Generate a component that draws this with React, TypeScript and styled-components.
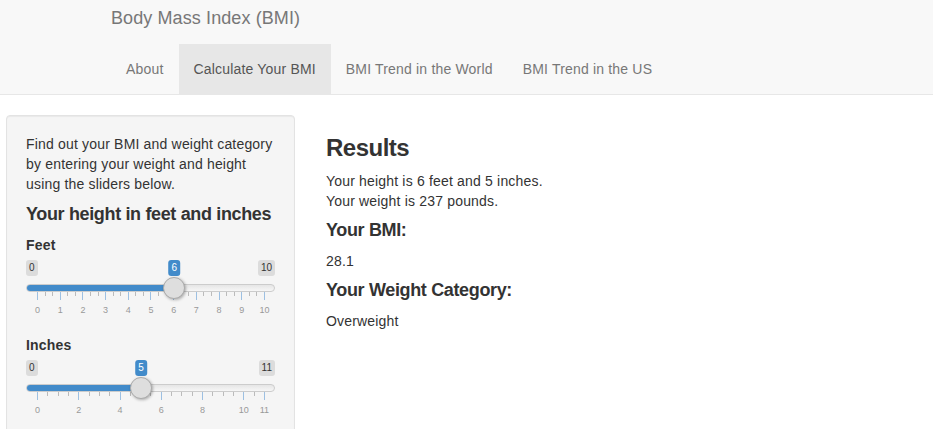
import React from "react";
import styled, { createGlobalStyle } from "styled-components";

const GlobalStyle = createGlobalStyle`
  html, body { margin: 0; padding: 0; background: #fff; }
  body {
    font-family: "Liberation Sans", Arial, sans-serif;
    font-size: 14px;
    line-height: 1.428571;
    letter-spacing: 0.18px;
    color: #333;
  }
  * { box-sizing: border-box; }
`;

const Navbar = styled.nav`
  background: #f8f8f8;
  border-bottom: 1px solid #e7e7e7;
  padding-left: 111px;
  margin-bottom: 20px;
`;

const Brand = styled.div`
  height: 44px;
  padding-top: 8px;
  font-size: 18px;
  line-height: 20px;
  letter-spacing: 0.1px;
  color: #777;
`;

const NavList = styled.ul`
  display: flex;
  list-style: none;
  margin: 0;
  padding: 0;
  height: 50px;
`;

const NavItem = styled.li<{ $active?: boolean }>`
  padding: 15px;
  line-height: 20px;
  color: ${(p) => (p.$active ? "#555" : "#777")};
  background: ${(p) => (p.$active ? "#e7e7e7" : "transparent")};
`;

const Page = styled.div`
  display: flex;
  align-items: flex-start;
  padding-left: 6px;
  gap: 31px;
`;

const Well = styled.div`
  width: 289px;
  min-height: 330px;
  background: #f5f5f5;
  border: 1px solid #e3e3e3;
  border-radius: 4px;
  padding: 19px;
  box-shadow: inset 0 1px 1px rgba(0, 0, 0, 0.05);
`;

const Main = styled.div`
  display: flex;
  flex-direction: column;
`;

const Para = styled.p`
  margin: 0 0 10px;
`;

const H3 = styled.h3`
  font-size: 24px;
  font-weight: 700;
  line-height: 1.1;
  letter-spacing: -0.5px;
  margin: 20px 0 10px;
`;

const H4 = styled.h4`
  font-size: 18px;
  font-weight: 700;
  line-height: 1.1;
  letter-spacing: -0.35px;
  margin: 10px 0;
`;

const Line = styled.div`
  line-height: 20px;
`;

const FormGroup = styled.div`
  margin-bottom: 15px;
`;

const Label = styled.div`
  font-weight: 700;
  line-height: 20px;
  margin-bottom: 5px;
`;

/* ---------- range slider ---------- */

const Slider = styled.div`
  display: flex;
  flex-direction: column;
  height: 60px;
`;

const LabelRow = styled.div`
  position: relative;
  display: flex;
  justify-content: space-between;
  align-items: flex-start;
  height: 24px;
`;

const Chip = styled.span<{ $accent?: boolean }>`
  font-size: 10px;
  line-height: 1.4;
  letter-spacing: 0;
  padding: 1px 3px;
  border-radius: 3px;
  background: ${(p) => (p.$accent ? "#428bca" : "rgba(0, 0, 0, 0.1)")};
  color: ${(p) => (p.$accent ? "#fff" : "#333")};
`;

const ValueChip = styled(Chip)`
  position: absolute;
  top: 0;
  transform: translateX(-50%);
`;

const TrackBox = styled.div`
  position: relative;
  height: 8px;
`;

const Track = styled.div`
  display: flex;
  height: 8px;
  border: 1px solid #ccc;
  border-radius: 8px;
  background: linear-gradient(to bottom, #ddd -50%, #fff 150%);
  overflow: hidden;
`;

const Bar = styled.div`
  margin: -1px 0 -1px -1px;
  height: 8px;
  background: #428bca;
`;

const Handle = styled.div`
  position: absolute;
  top: -7px;
  width: 22px;
  height: 22px;
  margin-left: -11px;
  border-radius: 50%;
  border: 1px solid #ababab;
  background: #dedede;
  box-shadow: 1px 1px 3px rgba(0, 0, 0, 0.3);
`;

const Grid = styled.div`
  display: flex;
  justify-content: space-between;
  align-items: flex-start;
  margin: 0 10px 0 11px;
`;

const TickCol = styled.div`
  display: flex;
  flex-direction: column;
  align-items: center;
  width: 1px;
`;

const TickMark = styled.span<{ $small?: boolean }>`
  width: 1px;
  height: ${(p) => (p.$small ? "4px" : "8px")};
  background: ${(p) => (p.$small ? "#bbb" : "#9dc0e2")};
`;

const TickText = styled.span`
  margin-top: 5px;
  font-size: 9px;
  line-height: 10px;
  letter-spacing: 0;
  white-space: nowrap;
  color: #999;
`;

type Tick = { v: number; major: boolean };

type SliderProps = {
  min: number;
  max: number;
  value: number;
  ticks: Tick[];
};

const GRID_W = 228;

const RangeSlider: React.FC<SliderProps> = ({ min, max, value, ticks }) => {
  const handleX = 11 + ((value - min) / (max - min)) * GRID_W;
  return (
    <Slider>
      <LabelRow>
        <Chip>{min}</Chip>
        <ValueChip $accent style={{ left: handleX + 0.5 }}>
          {value}
        </ValueChip>
        <Chip>{max}</Chip>
      </LabelRow>
      <TrackBox>
        <Track>
          <Bar style={{ width: handleX + 1 }} />
        </Track>
        <Handle style={{ left: handleX }} />
      </TrackBox>
      <Grid>
        {ticks.map((t) => (
          <TickCol key={t.v}>
            <TickMark $small={!t.major} />
            {t.major && <TickText>{t.v}</TickText>}
          </TickCol>
        ))}
      </Grid>
    </Slider>
  );
};

const feetTicks: Tick[] = Array.from({ length: 31 }, (_, i) => ({
  v: i % 3 === 0 ? i / 3 : i / 3 + 100,
  major: i % 3 === 0,
}));
const inchMajors = [0, 2, 4, 6, 8, 10, 11];
const inchTicks: Tick[] = Array.from({ length: 23 }, (_, i) => ({
  v: i / 2,
  major: inchMajors.includes(i / 2),
}));

export default function App() {
  return (
    <>
      <GlobalStyle />
      <Navbar>
        <Brand>Body Mass Index (BMI)</Brand>
        <NavList>
          <NavItem>About</NavItem>
          <NavItem $active>Calculate Your BMI</NavItem>
          <NavItem>BMI Trend in the World</NavItem>
          <NavItem>BMI Trend in the US</NavItem>
        </NavList>
      </Navbar>
      <Page>
        <Well>
          <Para>
            Find out your BMI and weight category by entering your weight and height
            using the sliders below.
          </Para>
          <H4>Your height in feet and inches</H4>
          <FormGroup>
            <Label>Feet</Label>
            <RangeSlider min={0} max={10} value={6} ticks={feetTicks} />
          </FormGroup>
          <FormGroup>
            <Label>Inches</Label>
            <RangeSlider min={0} max={11} value={5} ticks={inchTicks} />
          </FormGroup>
        </Well>
        <Main>
          <H3>Results</H3>
          <Line>Your height is 6 feet and 5 inches.</Line>
          <Line>Your weight is 237 pounds.</Line>
          <H4>Your BMI:</H4>
          <Line>28.1</Line>
          <H4>Your Weight Category:</H4>
          <Line>Overweight</Line>
        </Main>
      </Page>
    </>
  );
}
